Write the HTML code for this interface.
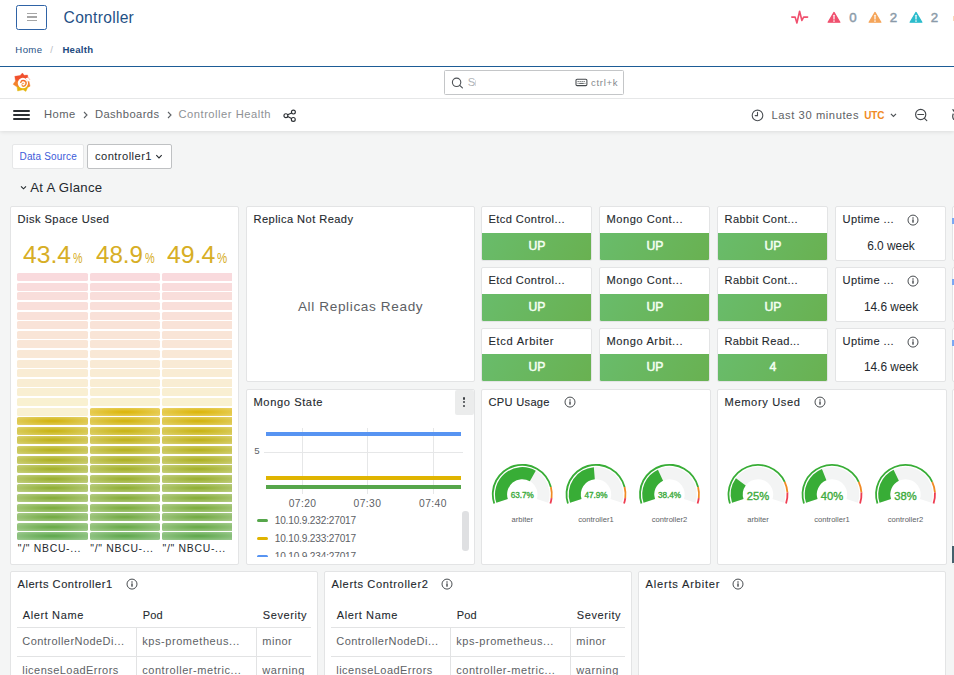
<!DOCTYPE html>
<html><head><meta charset="utf-8"><title>Controller Health</title><style>
html,body{margin:0;padding:0;}
body{width:954px;height:675px;overflow:hidden;position:relative;background:#f4f5f5;font-family:"Liberation Sans", sans-serif;}
#root{position:absolute;left:0;top:0;width:954px;height:675px;overflow:hidden;}
#root div,#root span,#root svg{position:absolute;box-sizing:border-box;}
.t{white-space:nowrap;font-family:"Liberation Sans", sans-serif;}
.p{background:#fff;border:1px solid #e3e4e5;border-radius:2px;}
</style></head><body><div id="root">
<div style="left:0px;top:0px;width:954px;height:66px;background:#fff;"></div>
<div style="left:16px;top:5px;width:31px;height:25px;border:1px solid #2f63a6;border-radius:2.4px;background:#fff;"></div>
<div style="left:26.5px;top:13.0px;width:10.2px;height:1.0px;background:#a6a6a6;"></div>
<div style="left:26.5px;top:16.2px;width:10.2px;height:1.5px;background:#a6a6a6;"></div>
<div style="left:26.5px;top:19.8px;width:10.2px;height:1.0px;background:#a6a6a6;"></div>
<span class="t" style="left:63.6px;top:10.19px;font-size:15.6px;line-height:15.6px;color:#1f5186;font-weight:400;letter-spacing:0.288px;">Controller</span>
<span class="t" style="left:15.3px;top:44.87px;font-size:9.6px;line-height:9.6px;color:#1f5186;font-weight:400;letter-spacing:0.402px;">Home</span>
<span class="t" style="left:50.2px;top:44.87px;font-size:9.6px;line-height:9.6px;color:#b8bcc2;font-weight:400;">/</span>
<span class="t" style="left:62.4px;top:44.87px;font-size:9.6px;line-height:9.6px;color:#1d4a80;font-weight:700;letter-spacing:0.294px;">Health</span>
<div style="left:0px;top:66px;width:954px;height:1.4px;background:#1d5c96;"></div>
<svg style="left:790px;top:9px;width:19px;height:17px" viewBox="0 0 19 17"><path d="M1.8 8.1 H5.1 L6.9 14 L9.6 2.3 L11.9 11.5 L13.6 8.1 H17.6" fill="none" stroke="#f0506e" stroke-width="1.6" stroke-linejoin="round" stroke-linecap="round"/></svg>
<svg style="left:826.8px;top:10.6px;width:14px;height:13px" viewBox="0 0 14 13"><path d="M7 1.4 L12.9 11.2 H1.1 Z" fill="#f0506e" stroke="#f0506e" stroke-width="1.2" stroke-linejoin="round"/><rect x="6.4" y="3.7" width="1.2" height="4.9" rx="0.5" fill="#fff"/><circle cx="7" cy="10.1" r="0.8" fill="#fff"/></svg>
<span class="t" style="left:849.2px;top:10.54px;font-size:13.3px;line-height:13.3px;color:#8a9aa8;font-weight:400;-webkit-text-stroke:0.45px #8a9aa8;">0</span>
<svg style="left:867.6px;top:10.6px;width:14px;height:13px" viewBox="0 0 14 13"><path d="M7 1.4 L12.9 11.2 H1.1 Z" fill="#f5a55a" stroke="#f5a55a" stroke-width="1.2" stroke-linejoin="round"/><rect x="6.4" y="3.7" width="1.2" height="4.9" rx="0.5" fill="#fff"/><circle cx="7" cy="10.1" r="0.8" fill="#fff"/></svg>
<span class="t" style="left:889.7px;top:10.54px;font-size:13.3px;line-height:13.3px;color:#8a9aa8;font-weight:400;-webkit-text-stroke:0.45px #8a9aa8;">2</span>
<svg style="left:908.8px;top:10.6px;width:14px;height:13px" viewBox="0 0 14 13"><path d="M7 1.4 L12.9 11.2 H1.1 Z" fill="#2bbccc" stroke="#2bbccc" stroke-width="1.2" stroke-linejoin="round"/><rect x="6.4" y="3.7" width="1.2" height="4.9" rx="0.5" fill="#fff"/><circle cx="7" cy="10.1" r="0.8" fill="#fff"/></svg>
<span class="t" style="left:930.7px;top:10.54px;font-size:13.3px;line-height:13.3px;color:#8a9aa8;font-weight:400;-webkit-text-stroke:0.45px #8a9aa8;">2</span>
<div style="left:953px;top:16px;width:1px;height:5px;background:#fbd9b5;"></div>
<div style="left:0px;top:67.4px;width:954px;height:31px;background:#fff;"></div>
<div style="left:0px;top:98px;width:954px;height:1px;background:#e6e7e8;"></div>
<svg style="left:8px;top:68px;width:30px;height:30px" viewBox="0 0 675 675">
<defs><linearGradient id="gl" gradientUnits="userSpaceOnUse" x1="0" y1="108" x2="0" y2="540"><stop offset="0" stop-color="#f04a2d"/><stop offset="0.36" stop-color="#f1542c"/><stop offset="0.44" stop-color="#f47d2e"/><stop offset="0.70" stop-color="#f3872a"/><stop offset="0.76" stop-color="#e6b50b"/><stop offset="1" stop-color="#e2b40a"/></linearGradient></defs>
<path d="M325 112 L364 164 L440 158 L448 206 L490 262 L474 312 L498 408 L444 438 L402 528 L340 490 L216 518 L204 430 L114 366 L168 292 L152 188 L272 168 Z" fill="url(#gl)" stroke="url(#gl)" stroke-width="8" stroke-linejoin="round"/>
<circle cx="335" cy="338" r="116" fill="#fff"/>
<path d="M395 232 L452 212 L518 305 L440 300 Z" fill="#fff"/>
<path d="M286.7 323.8 A62 62 0 1 1 323.8 403.3" fill="none" stroke="url(#gl)" stroke-width="32" stroke-linecap="round"/>
<path d="M323.8 403.3 Q300 385 318 352 Q335 330 356 345" fill="none" stroke="url(#gl)" stroke-width="20" stroke-linecap="round" opacity="0.85"/>
</svg>
<div style="left:444px;top:70px;width:180px;height:25px;border:1px solid #c4c6c8;border-radius:1.5px;background:#fff;"></div>
<svg style="left:451px;top:76.5px;width:12px;height:12px" viewBox="0 0 12 12"><circle cx="5.6" cy="5.3" r="4.2" fill="none" stroke="#4d5155" stroke-width="1.1"/><path d="M8.7 8.4 L11.4 10.9" stroke="#4d5155" stroke-width="1.2" stroke-linecap="round"/></svg>
<span class="t" style="left:467.7px;top:77.13px;font-size:11.3px;line-height:11.3px;color:#b0b3b6;font-weight:400;">S</span>
<div style="left:474.7px;top:80.2px;width:1.1px;height:5.6px;background:#c9cbcd;opacity:.7;border-radius:1px;"></div>
<svg style="left:575px;top:77px;width:13px;height:10px" viewBox="0 0 13 10"><rect x="1.0" y="2.2" width="10.9" height="6.4" rx="1.1" fill="none" stroke="#44484c" stroke-width="1.05"/><path d="M2.6 4.5 h7.8" stroke="#44484c" stroke-width="0.9" stroke-dasharray="1.1 0.9"/><path d="M4.2 6.4 h4.6" stroke="#44484c" stroke-width="0.9"/><path d="M2.6 6.4 h0.9 M9.5 6.4 h0.9" stroke="#44484c" stroke-width="0.9"/></svg>
<span class="t" style="left:591.0px;top:77.76px;font-size:9.5px;line-height:9.5px;color:#85888c;font-weight:400;letter-spacing:0.726px;">ctrl+k</span>
<div style="left:0px;top:99px;width:954px;height:32px;background:#fff;box-shadow:0 1px 4px rgba(0,0,0,0.10);clip-path:inset(0px 0px -12px 0px);"></div>
<div style="left:13.4px;top:109.7px;width:16.2px;height:1.9px;background:#2b2f33;border-radius:1px;"></div>
<div style="left:13.4px;top:113.7px;width:16.2px;height:1.9px;background:#2b2f33;border-radius:1px;"></div>
<div style="left:13.4px;top:117.7px;width:16.2px;height:1.9px;background:#2b2f33;border-radius:1px;"></div>
<span class="t" style="left:44px;top:109.12px;font-size:11.2px;line-height:11.2px;color:#5d6165;font-weight:400;letter-spacing:0.452px;">Home</span>
<svg style="left:83px;top:111px;width:5px;height:8px" viewBox="0 0 5 8"><path d="M1 1 L4 4 L1 7" fill="none" stroke="#5d6165" stroke-width="1.1"/></svg>
<span class="t" style="left:95px;top:109.12px;font-size:11.2px;line-height:11.2px;color:#5d6165;font-weight:400;letter-spacing:0.408px;">Dashboards</span>
<svg style="left:167px;top:111px;width:5px;height:8px" viewBox="0 0 5 8"><path d="M1 1 L4 4 L1 7" fill="none" stroke="#5d6165" stroke-width="1.1"/></svg>
<span class="t" style="left:178.5px;top:109.12px;font-size:11.2px;line-height:11.2px;color:#8e9194;font-weight:400;letter-spacing:0.503px;">Controller Health</span>
<svg style="left:282.9px;top:107.5px;width:14px;height:15px" viewBox="0 0 14 15"><circle cx="10.4" cy="4.0" r="1.95" fill="none" stroke="#2b2f33" stroke-width="1.15"/><circle cx="2.9" cy="7.7" r="1.95" fill="none" stroke="#2b2f33" stroke-width="1.15"/><circle cx="10.3" cy="11.4" r="1.95" fill="none" stroke="#2b2f33" stroke-width="1.15"/><path d="M4.7 6.8 L8.6 4.9 M4.7 8.6 L8.5 10.5" stroke="#2b2f33" stroke-width="1.15"/></svg>
<svg style="left:750.5px;top:109px;width:13px;height:13px" viewBox="0 0 13 13"><circle cx="6.5" cy="6.4" r="5.3" fill="none" stroke="#4d5155" stroke-width="1.1"/><path d="M6.5 3.4 V6.6 H4.2" fill="none" stroke="#4d5155" stroke-width="1.1" stroke-linecap="round"/></svg>
<span class="t" style="left:771.5px;top:110.12px;font-size:11.2px;line-height:11.2px;color:#5d6165;font-weight:400;letter-spacing:0.573px;">Last 30 minutes</span>
<span class="t" style="left:864.3px;top:111.03px;font-size:10.0px;line-height:10.0px;color:#f08a24;font-weight:700;letter-spacing:-0.181px;">UTC</span>
<svg style="left:889px;top:112px;width:9px;height:6px" viewBox="0 0 9 6"><path d="M1.9 1.9 L4.45 4.5 L7 1.9" fill="none" stroke="#4d5155" stroke-width="1.15"/></svg>
<svg style="left:914px;top:108px;width:14px;height:14px" viewBox="0 0 14 14"><circle cx="6.7" cy="6.5" r="5.1" fill="none" stroke="#44484c" stroke-width="1.15"/><path d="M10.5 10.4 L12.8 12.7 M3.8 6.5 H9.6" stroke="#44484c" stroke-width="1.15" stroke-linecap="round"/></svg>
<svg style="left:950px;top:106px;width:6px;height:18px" viewBox="0 0 6 18"><path d="M1.8 3.2 L4.5 3.6 L4.2 6.6 Z" fill="#44484c"/><path d="M3.4 7.6 Q1.8 10.6 3.8 13.8" fill="none" stroke="#44484c" stroke-width="1.2"/></svg>
<div style="left:12px;top:144px;width:72px;height:25px;background:#fff;border:1px solid #e6e7e8;border-radius:2px;"></div>
<span class="t" style="left:19.5px;top:152.03px;font-size:10px;line-height:10px;color:#3d5bd9;font-weight:400;letter-spacing:0.161px;">Data Source</span>
<div style="left:87px;top:144px;width:85px;height:25px;background:#fff;border:1px solid #bfc1c3;border-radius:2px;"></div>
<span class="t" style="left:95px;top:151.12px;font-size:11.2px;line-height:11.2px;color:#24292e;font-weight:400;letter-spacing:0.427px;">controller1</span>
<svg style="left:155px;top:154px;width:8px;height:6px" viewBox="0 0 8 6"><path d="M1.3 1.2 L4 3.9 L6.7 1.2" fill="none" stroke="#24292e" stroke-width="1.1"/></svg>
<svg style="left:20px;top:185px;width:7px;height:6px" viewBox="0 0 7 6"><path d="M1 1.3 L3.5 3.8 L6 1.3" fill="none" stroke="#24292e" stroke-width="1.1"/></svg>
<span class="t" style="left:30.2px;top:181.03px;font-size:13.2px;line-height:13.2px;color:#24292e;font-weight:400;letter-spacing:0.308px;">At A Glance</span>
<div class="p" style="left:10px;top:206px;width:229px;height:359px;"></div>
<span class="t" style="left:17.5px;top:213.50px;font-size:11.1px;line-height:11.1px;color:#24292e;font-weight:400;letter-spacing:0.458px;-webkit-text-stroke:0.12px #24292e;">Disk Space Used</span>
<span class="t" style="left:23.0px;top:242.68px;font-size:24px;line-height:24px;color:#d7ae25;font-weight:400;transform-origin:0 0;transform:scaleX(1.0274);">43.4</span>
<span class="t" style="left:72.9px;top:250.81px;font-size:14.4px;line-height:14.4px;color:#d7ae25;font-weight:400;transform-origin:0 0;transform:scaleX(0.7424);">%</span>
<span class="t" style="left:95.6px;top:242.68px;font-size:24px;line-height:24px;color:#d7ae25;font-weight:400;transform-origin:0 0;transform:scaleX(1.0060);">48.9</span>
<span class="t" style="left:144.6px;top:250.81px;font-size:14.4px;line-height:14.4px;color:#d7ae25;font-weight:400;transform-origin:0 0;transform:scaleX(0.7580);">%</span>
<span class="t" style="left:167px;top:242.68px;font-size:24px;line-height:24px;color:#d7ae25;font-weight:400;transform-origin:0 0;transform:scaleX(1.0338);">49.4</span>
<span class="t" style="left:216.6px;top:250.81px;font-size:14.4px;line-height:14.4px;color:#d7ae25;font-weight:400;transform-origin:0 0;transform:scaleX(0.7971);">%</span>
<div style="left:10px;top:268px;width:222px;height:275px;overflow:hidden;"><div style="left:7.1px;top:5.0px;width:70.8px;height:8px;border-radius:1.6px;background:rgba(224,52,66,0.18);"></div><div style="left:7.1px;top:15.0px;width:70.8px;height:8px;border-radius:1.6px;background:rgba(224,61,61,0.18);"></div><div style="left:7.1px;top:24.0px;width:70.8px;height:8px;border-radius:1.6px;background:rgba(224,71,56,0.18);"></div><div style="left:7.1px;top:34.0px;width:70.8px;height:8px;border-radius:1.6px;background:rgba(224,80,51,0.18);"></div><div style="left:7.1px;top:44.0px;width:70.8px;height:8px;border-radius:1.6px;background:rgba(224,90,46,0.18);"></div><div style="left:7.1px;top:53.0px;width:70.8px;height:8px;border-radius:1.6px;background:rgba(224,99,41,0.18);"></div><div style="left:7.1px;top:63.0px;width:70.8px;height:8px;border-radius:1.6px;background:rgba(224,109,36,0.18);"></div><div style="left:7.1px;top:72.0px;width:70.8px;height:8px;border-radius:1.6px;background:rgba(224,118,32,0.18);"></div><div style="left:7.1px;top:82.0px;width:70.8px;height:8px;border-radius:1.6px;background:rgba(224,128,27,0.18);"></div><div style="left:7.1px;top:92.0px;width:70.8px;height:8px;border-radius:1.6px;background:rgba(224,137,22,0.18);"></div><div style="left:7.1px;top:101.0px;width:70.8px;height:8px;border-radius:1.6px;background:rgba(224,147,17,0.18);"></div><div style="left:7.1px;top:111.0px;width:70.8px;height:8px;border-radius:1.6px;background:rgba(224,156,12,0.18);"></div><div style="left:7.1px;top:120.0px;width:70.8px;height:8px;border-radius:1.6px;background:rgba(224,166,7,0.18);"></div><div style="left:7.1px;top:130.0px;width:70.8px;height:8px;border-radius:1.6px;background:rgba(224,175,2,0.18);"></div><div style="left:7.1px;top:140.0px;width:70.8px;height:8px;border-radius:1.6px;background:rgba(219,180,3,0.18);"></div><div style="left:7.1px;top:149.0px;width:70.8px;height:8px;border-radius:1.6px;background:radial-gradient(ellipse at center, rgba(209,178,8,0.95) 10%, rgba(209,178,8,0.58) 100%);"></div><div style="left:7.1px;top:159.0px;width:70.8px;height:8px;border-radius:1.6px;background:radial-gradient(ellipse at center, rgba(199,178,13,0.95) 10%, rgba(199,178,13,0.58) 100%);"></div><div style="left:7.1px;top:168.0px;width:70.8px;height:8px;border-radius:1.6px;background:radial-gradient(ellipse at center, rgba(190,176,19,0.95) 10%, rgba(190,176,19,0.58) 100%);"></div><div style="left:7.1px;top:178.0px;width:70.8px;height:8px;border-radius:1.6px;background:radial-gradient(ellipse at center, rgba(180,176,24,0.95) 10%, rgba(180,176,24,0.58) 100%);"></div><div style="left:7.1px;top:188.0px;width:70.8px;height:8px;border-radius:1.6px;background:radial-gradient(ellipse at center, rgba(170,174,29,0.95) 10%, rgba(170,174,29,0.58) 100%);"></div><div style="left:7.1px;top:197.0px;width:70.8px;height:8px;border-radius:1.6px;background:radial-gradient(ellipse at center, rgba(160,174,35,0.95) 10%, rgba(160,174,35,0.58) 100%);"></div><div style="left:7.1px;top:207.0px;width:70.8px;height:8px;border-radius:1.6px;background:radial-gradient(ellipse at center, rgba(150,172,40,0.95) 10%, rgba(150,172,40,0.58) 100%);"></div><div style="left:7.1px;top:216.0px;width:70.8px;height:8px;border-radius:1.6px;background:radial-gradient(ellipse at center, rgba(140,172,46,0.95) 10%, rgba(140,172,46,0.58) 100%);"></div><div style="left:7.1px;top:226.0px;width:70.8px;height:8px;border-radius:1.6px;background:radial-gradient(ellipse at center, rgba(130,170,51,0.95) 10%, rgba(130,170,51,0.58) 100%);"></div><div style="left:7.1px;top:236.0px;width:70.8px;height:8px;border-radius:1.6px;background:radial-gradient(ellipse at center, rgba(120,170,56,0.95) 10%, rgba(120,170,56,0.58) 100%);"></div><div style="left:7.1px;top:245.0px;width:70.8px;height:8px;border-radius:1.6px;background:radial-gradient(ellipse at center, rgba(111,168,62,0.95) 10%, rgba(111,168,62,0.58) 100%);"></div><div style="left:7.1px;top:255.0px;width:70.8px;height:8px;border-radius:1.6px;background:radial-gradient(ellipse at center, rgba(101,168,67,0.95) 10%, rgba(101,168,67,0.58) 100%);"></div><div style="left:7.1px;top:264.0px;width:70.8px;height:8px;border-radius:1.6px;background:radial-gradient(ellipse at center, rgba(91,166,72,0.95) 10%, rgba(91,166,72,0.58) 100%);"></div><div style="left:80.1px;top:5.0px;width:69.8px;height:8px;border-radius:1.6px;background:rgba(224,52,66,0.18);"></div><div style="left:80.1px;top:15.0px;width:69.8px;height:8px;border-radius:1.6px;background:rgba(224,61,61,0.18);"></div><div style="left:80.1px;top:24.0px;width:69.8px;height:8px;border-radius:1.6px;background:rgba(224,71,56,0.18);"></div><div style="left:80.1px;top:34.0px;width:69.8px;height:8px;border-radius:1.6px;background:rgba(224,80,51,0.18);"></div><div style="left:80.1px;top:44.0px;width:69.8px;height:8px;border-radius:1.6px;background:rgba(224,90,46,0.18);"></div><div style="left:80.1px;top:53.0px;width:69.8px;height:8px;border-radius:1.6px;background:rgba(224,99,41,0.18);"></div><div style="left:80.1px;top:63.0px;width:69.8px;height:8px;border-radius:1.6px;background:rgba(224,109,36,0.18);"></div><div style="left:80.1px;top:72.0px;width:69.8px;height:8px;border-radius:1.6px;background:rgba(224,118,32,0.18);"></div><div style="left:80.1px;top:82.0px;width:69.8px;height:8px;border-radius:1.6px;background:rgba(224,128,27,0.18);"></div><div style="left:80.1px;top:92.0px;width:69.8px;height:8px;border-radius:1.6px;background:rgba(224,137,22,0.18);"></div><div style="left:80.1px;top:101.0px;width:69.8px;height:8px;border-radius:1.6px;background:rgba(224,147,17,0.18);"></div><div style="left:80.1px;top:111.0px;width:69.8px;height:8px;border-radius:1.6px;background:rgba(224,156,12,0.18);"></div><div style="left:80.1px;top:120.0px;width:69.8px;height:8px;border-radius:1.6px;background:rgba(224,166,7,0.18);"></div><div style="left:80.1px;top:130.0px;width:69.8px;height:8px;border-radius:1.6px;background:rgba(224,175,2,0.18);"></div><div style="left:80.1px;top:140.0px;width:69.8px;height:8px;border-radius:1.6px;background:radial-gradient(ellipse at center, rgba(219,180,3,0.95) 10%, rgba(219,180,3,0.58) 100%);"></div><div style="left:80.1px;top:149.0px;width:69.8px;height:8px;border-radius:1.6px;background:radial-gradient(ellipse at center, rgba(209,178,8,0.95) 10%, rgba(209,178,8,0.58) 100%);"></div><div style="left:80.1px;top:159.0px;width:69.8px;height:8px;border-radius:1.6px;background:radial-gradient(ellipse at center, rgba(199,178,13,0.95) 10%, rgba(199,178,13,0.58) 100%);"></div><div style="left:80.1px;top:168.0px;width:69.8px;height:8px;border-radius:1.6px;background:radial-gradient(ellipse at center, rgba(190,176,19,0.95) 10%, rgba(190,176,19,0.58) 100%);"></div><div style="left:80.1px;top:178.0px;width:69.8px;height:8px;border-radius:1.6px;background:radial-gradient(ellipse at center, rgba(180,176,24,0.95) 10%, rgba(180,176,24,0.58) 100%);"></div><div style="left:80.1px;top:188.0px;width:69.8px;height:8px;border-radius:1.6px;background:radial-gradient(ellipse at center, rgba(170,174,29,0.95) 10%, rgba(170,174,29,0.58) 100%);"></div><div style="left:80.1px;top:197.0px;width:69.8px;height:8px;border-radius:1.6px;background:radial-gradient(ellipse at center, rgba(160,174,35,0.95) 10%, rgba(160,174,35,0.58) 100%);"></div><div style="left:80.1px;top:207.0px;width:69.8px;height:8px;border-radius:1.6px;background:radial-gradient(ellipse at center, rgba(150,172,40,0.95) 10%, rgba(150,172,40,0.58) 100%);"></div><div style="left:80.1px;top:216.0px;width:69.8px;height:8px;border-radius:1.6px;background:radial-gradient(ellipse at center, rgba(140,172,46,0.95) 10%, rgba(140,172,46,0.58) 100%);"></div><div style="left:80.1px;top:226.0px;width:69.8px;height:8px;border-radius:1.6px;background:radial-gradient(ellipse at center, rgba(130,170,51,0.95) 10%, rgba(130,170,51,0.58) 100%);"></div><div style="left:80.1px;top:236.0px;width:69.8px;height:8px;border-radius:1.6px;background:radial-gradient(ellipse at center, rgba(120,170,56,0.95) 10%, rgba(120,170,56,0.58) 100%);"></div><div style="left:80.1px;top:245.0px;width:69.8px;height:8px;border-radius:1.6px;background:radial-gradient(ellipse at center, rgba(111,168,62,0.95) 10%, rgba(111,168,62,0.58) 100%);"></div><div style="left:80.1px;top:255.0px;width:69.8px;height:8px;border-radius:1.6px;background:radial-gradient(ellipse at center, rgba(101,168,67,0.95) 10%, rgba(101,168,67,0.58) 100%);"></div><div style="left:80.1px;top:264.0px;width:69.8px;height:8px;border-radius:1.6px;background:radial-gradient(ellipse at center, rgba(91,166,72,0.95) 10%, rgba(91,166,72,0.58) 100%);"></div><div style="left:152.1px;top:5.0px;width:73px;height:8px;border-radius:1.6px;background:rgba(224,52,66,0.18);"></div><div style="left:152.1px;top:15.0px;width:73px;height:8px;border-radius:1.6px;background:rgba(224,61,61,0.18);"></div><div style="left:152.1px;top:24.0px;width:73px;height:8px;border-radius:1.6px;background:rgba(224,71,56,0.18);"></div><div style="left:152.1px;top:34.0px;width:73px;height:8px;border-radius:1.6px;background:rgba(224,80,51,0.18);"></div><div style="left:152.1px;top:44.0px;width:73px;height:8px;border-radius:1.6px;background:rgba(224,90,46,0.18);"></div><div style="left:152.1px;top:53.0px;width:73px;height:8px;border-radius:1.6px;background:rgba(224,99,41,0.18);"></div><div style="left:152.1px;top:63.0px;width:73px;height:8px;border-radius:1.6px;background:rgba(224,109,36,0.18);"></div><div style="left:152.1px;top:72.0px;width:73px;height:8px;border-radius:1.6px;background:rgba(224,118,32,0.18);"></div><div style="left:152.1px;top:82.0px;width:73px;height:8px;border-radius:1.6px;background:rgba(224,128,27,0.18);"></div><div style="left:152.1px;top:92.0px;width:73px;height:8px;border-radius:1.6px;background:rgba(224,137,22,0.18);"></div><div style="left:152.1px;top:101.0px;width:73px;height:8px;border-radius:1.6px;background:rgba(224,147,17,0.18);"></div><div style="left:152.1px;top:111.0px;width:73px;height:8px;border-radius:1.6px;background:rgba(224,156,12,0.18);"></div><div style="left:152.1px;top:120.0px;width:73px;height:8px;border-radius:1.6px;background:rgba(224,166,7,0.18);"></div><div style="left:152.1px;top:130.0px;width:73px;height:8px;border-radius:1.6px;background:rgba(224,175,2,0.18);"></div><div style="left:152.1px;top:140.0px;width:73px;height:8px;border-radius:1.6px;background:radial-gradient(ellipse at center, rgba(219,180,3,0.95) 10%, rgba(219,180,3,0.58) 100%);"></div><div style="left:152.1px;top:149.0px;width:73px;height:8px;border-radius:1.6px;background:radial-gradient(ellipse at center, rgba(209,178,8,0.95) 10%, rgba(209,178,8,0.58) 100%);"></div><div style="left:152.1px;top:159.0px;width:73px;height:8px;border-radius:1.6px;background:radial-gradient(ellipse at center, rgba(199,178,13,0.95) 10%, rgba(199,178,13,0.58) 100%);"></div><div style="left:152.1px;top:168.0px;width:73px;height:8px;border-radius:1.6px;background:radial-gradient(ellipse at center, rgba(190,176,19,0.95) 10%, rgba(190,176,19,0.58) 100%);"></div><div style="left:152.1px;top:178.0px;width:73px;height:8px;border-radius:1.6px;background:radial-gradient(ellipse at center, rgba(180,176,24,0.95) 10%, rgba(180,176,24,0.58) 100%);"></div><div style="left:152.1px;top:188.0px;width:73px;height:8px;border-radius:1.6px;background:radial-gradient(ellipse at center, rgba(170,174,29,0.95) 10%, rgba(170,174,29,0.58) 100%);"></div><div style="left:152.1px;top:197.0px;width:73px;height:8px;border-radius:1.6px;background:radial-gradient(ellipse at center, rgba(160,174,35,0.95) 10%, rgba(160,174,35,0.58) 100%);"></div><div style="left:152.1px;top:207.0px;width:73px;height:8px;border-radius:1.6px;background:radial-gradient(ellipse at center, rgba(150,172,40,0.95) 10%, rgba(150,172,40,0.58) 100%);"></div><div style="left:152.1px;top:216.0px;width:73px;height:8px;border-radius:1.6px;background:radial-gradient(ellipse at center, rgba(140,172,46,0.95) 10%, rgba(140,172,46,0.58) 100%);"></div><div style="left:152.1px;top:226.0px;width:73px;height:8px;border-radius:1.6px;background:radial-gradient(ellipse at center, rgba(130,170,51,0.95) 10%, rgba(130,170,51,0.58) 100%);"></div><div style="left:152.1px;top:236.0px;width:73px;height:8px;border-radius:1.6px;background:radial-gradient(ellipse at center, rgba(120,170,56,0.95) 10%, rgba(120,170,56,0.58) 100%);"></div><div style="left:152.1px;top:245.0px;width:73px;height:8px;border-radius:1.6px;background:radial-gradient(ellipse at center, rgba(111,168,62,0.95) 10%, rgba(111,168,62,0.58) 100%);"></div><div style="left:152.1px;top:255.0px;width:73px;height:8px;border-radius:1.6px;background:radial-gradient(ellipse at center, rgba(101,168,67,0.95) 10%, rgba(101,168,67,0.58) 100%);"></div><div style="left:152.1px;top:264.0px;width:73px;height:8px;border-radius:1.6px;background:radial-gradient(ellipse at center, rgba(91,166,72,0.95) 10%, rgba(91,166,72,0.58) 100%);"></div></div>
<span class="t" style="left:17.8px;top:544.00px;font-size:10.4px;line-height:10.4px;color:#24292e;font-weight:400;letter-spacing:0.716px;">"/" NBCU-...</span>
<span class="t" style="left:90.3px;top:544.00px;font-size:10.4px;line-height:10.4px;color:#24292e;font-weight:400;letter-spacing:0.716px;">"/" NBCU-...</span>
<span class="t" style="left:162.6px;top:544.00px;font-size:10.4px;line-height:10.4px;color:#24292e;font-weight:400;letter-spacing:0.716px;">"/" NBCU-...</span>
<div class="p" style="left:246px;top:206px;width:229px;height:176px;"></div>
<span class="t" style="left:253.5px;top:213.50px;font-size:11.1px;line-height:11.1px;color:#24292e;font-weight:400;letter-spacing:0.438px;-webkit-text-stroke:0.12px #24292e;">Replica Not Ready</span>
<span class="t" style="left:360.6px;transform:translateX(-50%);top:299.99px;font-size:13.6px;line-height:13.6px;color:#5d6165;font-weight:400;letter-spacing:0.624px;">All Replicas Ready</span>
<div class="p" style="left:952px;top:206px;width:5px;height:55px;"></div>
<div class="p" style="left:952px;top:267px;width:5px;height:55px;"></div>
<div class="p" style="left:952px;top:328px;width:5px;height:54px;"></div>
<div class="p" style="left:481px;top:206px;width:111px;height:55px;"></div>
<span class="t" style="left:488.5px;top:213.50px;font-size:11.1px;line-height:11.1px;color:#24292e;font-weight:400;letter-spacing:0.407px;-webkit-text-stroke:0.12px #24292e;">Etcd Control...</span>
<div style="left:482px;top:233px;width:109px;height:27px;background:linear-gradient(120deg,#69bc6b,#69b151);border-radius:0 0 1.2px 1.2px;"></div>
<span class="t" style="left:536.9px;transform:translateX(-50%);top:240.37px;font-size:12.2px;line-height:12.2px;color:#f4fff2;font-weight:400;-webkit-text-stroke:0.5px #f4fff2;">UP</span>
<div class="p" style="left:599px;top:206px;width:111px;height:55px;"></div>
<span class="t" style="left:606.5px;top:213.50px;font-size:11.1px;line-height:11.1px;color:#24292e;font-weight:400;letter-spacing:0.526px;-webkit-text-stroke:0.12px #24292e;">Mongo Cont...</span>
<div style="left:600px;top:233px;width:109px;height:27px;background:linear-gradient(120deg,#69bc6b,#69b151);border-radius:0 0 1.2px 1.2px;"></div>
<span class="t" style="left:654.9px;transform:translateX(-50%);top:240.37px;font-size:12.2px;line-height:12.2px;color:#f4fff2;font-weight:400;-webkit-text-stroke:0.5px #f4fff2;">UP</span>
<div class="p" style="left:717px;top:206px;width:111px;height:55px;"></div>
<span class="t" style="left:724.5px;top:213.50px;font-size:11.1px;line-height:11.1px;color:#24292e;font-weight:400;letter-spacing:0.397px;-webkit-text-stroke:0.12px #24292e;">Rabbit Cont...</span>
<div style="left:718px;top:233px;width:109px;height:27px;background:linear-gradient(120deg,#69bc6b,#69b151);border-radius:0 0 1.2px 1.2px;"></div>
<span class="t" style="left:772.9px;transform:translateX(-50%);top:240.37px;font-size:12.2px;line-height:12.2px;color:#f4fff2;font-weight:400;-webkit-text-stroke:0.5px #f4fff2;">UP</span>
<div class="p" style="left:835px;top:206px;width:111px;height:55px;"></div>
<span class="t" style="left:842.5px;top:213.50px;font-size:11.1px;line-height:11.1px;color:#24292e;font-weight:400;letter-spacing:0.392px;-webkit-text-stroke:0.12px #24292e;">Uptime ...</span>
<svg style="left:906.5px;top:214.3px;width:12px;height:12px" viewBox="0 0 12 12"><circle cx="6" cy="6.1" r="5.0" fill="none" stroke="#484c50" stroke-width="1.0"/><rect x="5.4" y="5.4" width="1.2" height="3.3" fill="#24292e"/><rect x="5.4" y="3.4" width="1.2" height="1.2" fill="#24292e"/></svg>
<span class="t" style="left:891px;transform:translateX(-50%);top:240.53px;font-size:11.9px;line-height:11.9px;color:#24292e;font-weight:400;">6.0 week</span>
<div style="left:952.3px;top:217.5px;width:2px;height:6px;background:#7aa8f3;"></div>
<div class="p" style="left:481px;top:267px;width:111px;height:55px;"></div>
<span class="t" style="left:488.5px;top:274.50px;font-size:11.1px;line-height:11.1px;color:#24292e;font-weight:400;letter-spacing:0.407px;-webkit-text-stroke:0.12px #24292e;">Etcd Control...</span>
<div style="left:482px;top:294px;width:109px;height:27px;background:linear-gradient(120deg,#69bc6b,#69b151);border-radius:0 0 1.2px 1.2px;"></div>
<span class="t" style="left:536.9px;transform:translateX(-50%);top:301.37px;font-size:12.2px;line-height:12.2px;color:#f4fff2;font-weight:400;-webkit-text-stroke:0.5px #f4fff2;">UP</span>
<div class="p" style="left:599px;top:267px;width:111px;height:55px;"></div>
<span class="t" style="left:606.5px;top:274.50px;font-size:11.1px;line-height:11.1px;color:#24292e;font-weight:400;letter-spacing:0.526px;-webkit-text-stroke:0.12px #24292e;">Mongo Cont...</span>
<div style="left:600px;top:294px;width:109px;height:27px;background:linear-gradient(120deg,#69bc6b,#69b151);border-radius:0 0 1.2px 1.2px;"></div>
<span class="t" style="left:654.9px;transform:translateX(-50%);top:301.37px;font-size:12.2px;line-height:12.2px;color:#f4fff2;font-weight:400;-webkit-text-stroke:0.5px #f4fff2;">UP</span>
<div class="p" style="left:717px;top:267px;width:111px;height:55px;"></div>
<span class="t" style="left:724.5px;top:274.50px;font-size:11.1px;line-height:11.1px;color:#24292e;font-weight:400;letter-spacing:0.397px;-webkit-text-stroke:0.12px #24292e;">Rabbit Cont...</span>
<div style="left:718px;top:294px;width:109px;height:27px;background:linear-gradient(120deg,#69bc6b,#69b151);border-radius:0 0 1.2px 1.2px;"></div>
<span class="t" style="left:772.9px;transform:translateX(-50%);top:301.37px;font-size:12.2px;line-height:12.2px;color:#f4fff2;font-weight:400;-webkit-text-stroke:0.5px #f4fff2;">UP</span>
<div class="p" style="left:835px;top:267px;width:111px;height:55px;"></div>
<span class="t" style="left:842.5px;top:274.50px;font-size:11.1px;line-height:11.1px;color:#24292e;font-weight:400;letter-spacing:0.392px;-webkit-text-stroke:0.12px #24292e;">Uptime ...</span>
<svg style="left:906.5px;top:275.3px;width:12px;height:12px" viewBox="0 0 12 12"><circle cx="6" cy="6.1" r="5.0" fill="none" stroke="#484c50" stroke-width="1.0"/><rect x="5.4" y="5.4" width="1.2" height="3.3" fill="#24292e"/><rect x="5.4" y="3.4" width="1.2" height="1.2" fill="#24292e"/></svg>
<span class="t" style="left:891px;transform:translateX(-50%);top:301.53px;font-size:11.9px;line-height:11.9px;color:#24292e;font-weight:400;">14.6 week</span>
<div style="left:952.3px;top:278.5px;width:2px;height:6px;background:#7aa8f3;"></div>
<div class="p" style="left:481px;top:328px;width:111px;height:54px;"></div>
<span class="t" style="left:488.5px;top:335.50px;font-size:11.1px;line-height:11.1px;color:#24292e;font-weight:400;letter-spacing:0.696px;-webkit-text-stroke:0.12px #24292e;">Etcd Arbiter</span>
<div style="left:482px;top:354px;width:109px;height:27px;background:linear-gradient(120deg,#69bc6b,#69b151);border-radius:0 0 1.2px 1.2px;"></div>
<span class="t" style="left:536.9px;transform:translateX(-50%);top:361.37px;font-size:12.2px;line-height:12.2px;color:#f4fff2;font-weight:400;-webkit-text-stroke:0.5px #f4fff2;">UP</span>
<div class="p" style="left:599px;top:328px;width:111px;height:54px;"></div>
<span class="t" style="left:606.5px;top:335.50px;font-size:11.1px;line-height:11.1px;color:#24292e;font-weight:400;letter-spacing:0.581px;-webkit-text-stroke:0.12px #24292e;">Mongo Arbit...</span>
<div style="left:600px;top:354px;width:109px;height:27px;background:linear-gradient(120deg,#69bc6b,#69b151);border-radius:0 0 1.2px 1.2px;"></div>
<span class="t" style="left:654.9px;transform:translateX(-50%);top:361.37px;font-size:12.2px;line-height:12.2px;color:#f4fff2;font-weight:400;-webkit-text-stroke:0.5px #f4fff2;">UP</span>
<div class="p" style="left:717px;top:328px;width:111px;height:54px;"></div>
<span class="t" style="left:724.5px;top:335.50px;font-size:11.1px;line-height:11.1px;color:#24292e;font-weight:400;letter-spacing:0.314px;-webkit-text-stroke:0.12px #24292e;">Rabbit Read...</span>
<div style="left:718px;top:354px;width:109px;height:27px;background:linear-gradient(120deg,#69bc6b,#69b151);border-radius:0 0 1.2px 1.2px;"></div>
<span class="t" style="left:772.9px;transform:translateX(-50%);top:361.37px;font-size:12.2px;line-height:12.2px;color:#f4fff2;font-weight:400;-webkit-text-stroke:0.5px #f4fff2;">4</span>
<div class="p" style="left:835px;top:328px;width:111px;height:54px;"></div>
<span class="t" style="left:842.5px;top:335.50px;font-size:11.1px;line-height:11.1px;color:#24292e;font-weight:400;letter-spacing:0.392px;-webkit-text-stroke:0.12px #24292e;">Uptime ...</span>
<svg style="left:906.5px;top:336.3px;width:12px;height:12px" viewBox="0 0 12 12"><circle cx="6" cy="6.1" r="5.0" fill="none" stroke="#484c50" stroke-width="1.0"/><rect x="5.4" y="5.4" width="1.2" height="3.3" fill="#24292e"/><rect x="5.4" y="3.4" width="1.2" height="1.2" fill="#24292e"/></svg>
<span class="t" style="left:891px;transform:translateX(-50%);top:361.53px;font-size:11.9px;line-height:11.9px;color:#24292e;font-weight:400;">14.6 week</span>
<div style="left:952.3px;top:339.5px;width:2px;height:6px;background:#7aa8f3;"></div>
<div class="p" style="left:246px;top:389px;width:229px;height:176px;"></div>
<span class="t" style="left:253.5px;top:396.50px;font-size:11.1px;line-height:11.1px;color:#24292e;font-weight:400;letter-spacing:0.609px;-webkit-text-stroke:0.12px #24292e;">Mongo State</span>
<div style="left:455px;top:390px;width:19px;height:25px;background:#ebecec;border-radius:2px;"></div>
<div style="left:463.3px;top:397.4px;width:2.2px;height:2.2px;background:#3d4145;border-radius:1.1px;"></div>
<div style="left:463.3px;top:401.3px;width:2.2px;height:2.2px;background:#3d4145;border-radius:1.1px;"></div>
<div style="left:463.3px;top:405.1px;width:2.2px;height:2.2px;background:#3d4145;border-radius:1.1px;"></div>
<div style="left:302px;top:428px;width:1px;height:66px;background:#e6e7e8;"></div>
<div style="left:367px;top:428px;width:1px;height:66px;background:#e6e7e8;"></div>
<div style="left:432.5px;top:428px;width:1px;height:66px;background:#e6e7e8;"></div>
<div style="left:264px;top:452px;width:198.6px;height:1px;background:#e6e7e8;"></div>
<span class="t" style="left:254.3px;top:446.09px;font-size:9.7px;line-height:9.7px;color:#5d6165;font-weight:400;">5</span>
<div style="left:266px;top:432px;width:195px;height:4px;background:#5794f2;"></div>
<div style="left:266px;top:476px;width:195px;height:4px;background:#e0b400;"></div>
<div style="left:266px;top:485px;width:195px;height:4px;background:#56a64b;"></div>
<span class="t" style="left:302.59999999999997px;transform:translateX(-50%);top:498.68px;font-size:10.3px;line-height:10.3px;color:#5d6165;font-weight:400;letter-spacing:0.4px;">07:20</span>
<span class="t" style="left:367.5px;transform:translateX(-50%);top:498.68px;font-size:10.3px;line-height:10.3px;color:#5d6165;font-weight:400;letter-spacing:0.4px;">07:30</span>
<span class="t" style="left:432.9px;transform:translateX(-50%);top:498.68px;font-size:10.3px;line-height:10.3px;color:#5d6165;font-weight:400;letter-spacing:0.4px;">07:40</span>
<div style="left:247px;top:511px;width:227px;height:46px;overflow:hidden;"><div style="left:10px;top:8px;width:11px;height:3px;border-radius:1.5px;background:#56a64b"></div><span class="t" style="left:27.7px;top:5.2px;font-size:10.1px;line-height:10.1px;color:#5d6165;letter-spacing:-0.17px;">10.10.9.232:27017</span><div style="left:10px;top:26px;width:11px;height:3px;border-radius:1.5px;background:#e0b400"></div><span class="t" style="left:27.7px;top:23.2px;font-size:10.1px;line-height:10.1px;color:#5d6165;letter-spacing:-0.17px;">10.10.9.233:27017</span><div style="left:10px;top:43.6px;width:11px;height:3px;border-radius:1.5px;background:#5794f2"></div><span class="t" style="left:27.7px;top:40.8px;font-size:10.1px;line-height:10.1px;color:#5d6165;letter-spacing:-0.17px;">10.10.9.234:27017</span></div>
<div style="left:462.4px;top:511px;width:6.4px;height:40px;background:#dfe0e2;border-radius:3.2px;"></div>
<div class="p" style="left:481px;top:389px;width:230px;height:176px;"></div>
<span class="t" style="left:488.5px;top:396.50px;font-size:11.1px;line-height:11.1px;color:#24292e;font-weight:400;letter-spacing:0.303px;-webkit-text-stroke:0.12px #24292e;">CPU Usage</span>
<svg style="left:563.5px;top:396.4px;width:12px;height:12px" viewBox="0 0 12 12"><circle cx="6" cy="6.1" r="5.0" fill="none" stroke="#484c50" stroke-width="1.0"/><rect x="5.4" y="5.4" width="1.2" height="3.3" fill="#24292e"/><rect x="5.4" y="3.4" width="1.2" height="1.2" fill="#24292e"/></svg>
<svg style="left:0;top:0;width:954px;height:675px;pointer-events:none" viewBox="0 0 954 675"><path d="M496.34 502.84 A27.299999999999997 27.299999999999997 0 1 1 548.26 502.84 L536.76 499.10 A15.2 15.2 0 1 0 507.84 499.10 Z" fill="#f3f4f4"/><path d="M496.34 502.84 A27.299999999999997 27.299999999999997 0 0 1 535.78 470.66 L529.81 481.18 A15.2 15.2 0 0 0 507.84 499.10 Z" fill="#38ad36"/><path d="M493.39 503.79 A30.4 30.4 0 1 1 551.74 486.84 L550.00 487.29 A28.599999999999998 28.599999999999998 0 1 0 495.10 503.24 Z" fill="#38ad36"/><path d="M551.74 486.84 A30.4 30.4 0 0 1 552.46 498.21 L550.67 497.98 A28.599999999999998 28.599999999999998 0 0 0 550.00 487.29 Z" fill="#f08a24"/><path d="M552.46 498.21 A30.4 30.4 0 0 1 551.21 503.79 L549.50 503.24 A28.599999999999998 28.599999999999998 0 0 0 550.67 497.98 Z" fill="#ee3d52"/></svg>
<span class="t" style="left:522.3px;transform:translateX(-50%);top:491.56px;font-size:8.2px;line-height:8.2px;color:#3dab3d;font-weight:400;-webkit-text-stroke:0.35px #3dab3d;">63.7%</span>
<span class="t" style="left:522.3px;transform:translateX(-50%);top:515.97px;font-size:7.6px;line-height:7.6px;color:#5d6165;font-weight:400;">arbiter</span>
<svg style="left:0;top:0;width:954px;height:675px;pointer-events:none" viewBox="0 0 954 675"><path d="M570.04 502.84 A27.299999999999997 27.299999999999997 0 1 1 621.96 502.84 L610.46 499.10 A15.2 15.2 0 1 0 581.54 499.10 Z" fill="#f3f4f4"/><path d="M570.04 502.84 A27.299999999999997 27.299999999999997 0 0 1 593.84 467.19 L594.80 479.25 A15.2 15.2 0 0 0 581.54 499.10 Z" fill="#38ad36"/><path d="M567.09 503.79 A30.4 30.4 0 1 1 625.44 486.84 L623.70 487.29 A28.599999999999998 28.599999999999998 0 1 0 568.80 503.24 Z" fill="#38ad36"/><path d="M625.44 486.84 A30.4 30.4 0 0 1 626.16 498.21 L624.37 497.98 A28.599999999999998 28.599999999999998 0 0 0 623.70 487.29 Z" fill="#f08a24"/><path d="M626.16 498.21 A30.4 30.4 0 0 1 624.91 503.79 L623.20 503.24 A28.599999999999998 28.599999999999998 0 0 0 624.37 497.98 Z" fill="#ee3d52"/></svg>
<span class="t" style="left:596px;transform:translateX(-50%);top:491.56px;font-size:8.2px;line-height:8.2px;color:#3dab3d;font-weight:400;-webkit-text-stroke:0.35px #3dab3d;">47.9%</span>
<span class="t" style="left:596px;transform:translateX(-50%);top:515.97px;font-size:7.6px;line-height:7.6px;color:#5d6165;font-weight:400;">controller1</span>
<svg style="left:0;top:0;width:954px;height:675px;pointer-events:none" viewBox="0 0 954 675"><path d="M643.54 502.84 A27.299999999999997 27.299999999999997 0 1 1 695.46 502.84 L683.96 499.10 A15.2 15.2 0 1 0 655.04 499.10 Z" fill="#f3f4f4"/><path d="M643.54 502.84 A27.299999999999997 27.299999999999997 0 0 1 657.94 469.67 L663.06 480.63 A15.2 15.2 0 0 0 655.04 499.10 Z" fill="#38ad36"/><path d="M640.59 503.79 A30.4 30.4 0 1 1 698.94 486.84 L697.20 487.29 A28.599999999999998 28.599999999999998 0 1 0 642.30 503.24 Z" fill="#38ad36"/><path d="M698.94 486.84 A30.4 30.4 0 0 1 699.66 498.21 L697.87 497.98 A28.599999999999998 28.599999999999998 0 0 0 697.20 487.29 Z" fill="#f08a24"/><path d="M699.66 498.21 A30.4 30.4 0 0 1 698.41 503.79 L696.70 503.24 A28.599999999999998 28.599999999999998 0 0 0 697.87 497.98 Z" fill="#ee3d52"/></svg>
<span class="t" style="left:669.5px;transform:translateX(-50%);top:491.56px;font-size:8.2px;line-height:8.2px;color:#3dab3d;font-weight:400;-webkit-text-stroke:0.35px #3dab3d;">38.4%</span>
<span class="t" style="left:669.5px;transform:translateX(-50%);top:515.97px;font-size:7.6px;line-height:7.6px;color:#5d6165;font-weight:400;">controller2</span>
<div class="p" style="left:717px;top:389px;width:230px;height:176px;"></div>
<span class="t" style="left:724.5px;top:396.50px;font-size:11.1px;line-height:11.1px;color:#24292e;font-weight:400;letter-spacing:0.645px;-webkit-text-stroke:0.12px #24292e;">Memory Used</span>
<svg style="left:813.5px;top:396.4px;width:12px;height:12px" viewBox="0 0 12 12"><circle cx="6" cy="6.1" r="5.0" fill="none" stroke="#484c50" stroke-width="1.0"/><rect x="5.4" y="5.4" width="1.2" height="3.3" fill="#24292e"/><rect x="5.4" y="3.4" width="1.2" height="1.2" fill="#24292e"/></svg>
<svg style="left:0;top:0;width:954px;height:675px;pointer-events:none" viewBox="0 0 954 675"><path d="M732.04 502.84 A27.299999999999997 27.299999999999997 0 1 1 783.96 502.84 L772.46 499.10 A15.2 15.2 0 1 0 743.54 499.10 Z" fill="#f3f4f4"/><path d="M732.04 502.84 A27.299999999999997 27.299999999999997 0 0 1 735.91 478.35 L745.70 485.47 A15.2 15.2 0 0 0 743.54 499.10 Z" fill="#38ad36"/><path d="M729.09 503.79 A30.4 30.4 0 0 1 785.51 481.46 L783.88 482.22 A28.599999999999998 28.599999999999998 0 0 0 730.80 503.24 Z" fill="#38ad36"/><path d="M785.51 481.46 A30.4 30.4 0 0 1 788.34 492.49 L786.54 492.60 A28.599999999999998 28.599999999999998 0 0 0 783.88 482.22 Z" fill="#f08a24"/><path d="M788.34 492.49 A30.4 30.4 0 0 1 786.91 503.79 L785.20 503.24 A28.599999999999998 28.599999999999998 0 0 0 786.54 492.60 Z" fill="#ee3d52"/></svg>
<span class="t" style="left:758px;transform:translateX(-50%);top:490.92px;font-size:11.2px;line-height:11.2px;color:#3dab3d;font-weight:400;-webkit-text-stroke:0.35px #3dab3d;">25%</span>
<span class="t" style="left:758px;transform:translateX(-50%);top:515.97px;font-size:7.6px;line-height:7.6px;color:#5d6165;font-weight:400;">arbiter</span>
<svg style="left:0;top:0;width:954px;height:675px;pointer-events:none" viewBox="0 0 954 675"><path d="M806.04 502.84 A27.299999999999997 27.299999999999997 0 1 1 857.96 502.84 L846.46 499.10 A15.2 15.2 0 1 0 817.54 499.10 Z" fill="#f3f4f4"/><path d="M806.04 502.84 A27.299999999999997 27.299999999999997 0 0 1 821.95 469.02 L826.40 480.27 A15.2 15.2 0 0 0 817.54 499.10 Z" fill="#38ad36"/><path d="M803.09 503.79 A30.4 30.4 0 0 1 859.51 481.46 L857.88 482.22 A28.599999999999998 28.599999999999998 0 0 0 804.80 503.24 Z" fill="#38ad36"/><path d="M859.51 481.46 A30.4 30.4 0 0 1 862.34 492.49 L860.54 492.60 A28.599999999999998 28.599999999999998 0 0 0 857.88 482.22 Z" fill="#f08a24"/><path d="M862.34 492.49 A30.4 30.4 0 0 1 860.91 503.79 L859.20 503.24 A28.599999999999998 28.599999999999998 0 0 0 860.54 492.60 Z" fill="#ee3d52"/></svg>
<span class="t" style="left:832px;transform:translateX(-50%);top:490.92px;font-size:11.2px;line-height:11.2px;color:#3dab3d;font-weight:400;-webkit-text-stroke:0.35px #3dab3d;">40%</span>
<span class="t" style="left:832px;transform:translateX(-50%);top:515.97px;font-size:7.6px;line-height:7.6px;color:#5d6165;font-weight:400;">controller1</span>
<svg style="left:0;top:0;width:954px;height:675px;pointer-events:none" viewBox="0 0 954 675"><path d="M879.54 502.84 A27.299999999999997 27.299999999999997 0 1 1 931.46 502.84 L919.96 499.10 A15.2 15.2 0 1 0 891.04 499.10 Z" fill="#f3f4f4"/><path d="M879.54 502.84 A27.299999999999997 27.299999999999997 0 0 1 893.57 469.85 L898.86 480.73 A15.2 15.2 0 0 0 891.04 499.10 Z" fill="#38ad36"/><path d="M876.59 503.79 A30.4 30.4 0 0 1 933.01 481.46 L931.38 482.22 A28.599999999999998 28.599999999999998 0 0 0 878.30 503.24 Z" fill="#38ad36"/><path d="M933.01 481.46 A30.4 30.4 0 0 1 935.84 492.49 L934.04 492.60 A28.599999999999998 28.599999999999998 0 0 0 931.38 482.22 Z" fill="#f08a24"/><path d="M935.84 492.49 A30.4 30.4 0 0 1 934.41 503.79 L932.70 503.24 A28.599999999999998 28.599999999999998 0 0 0 934.04 492.60 Z" fill="#ee3d52"/></svg>
<span class="t" style="left:905.5px;transform:translateX(-50%);top:490.92px;font-size:11.2px;line-height:11.2px;color:#3dab3d;font-weight:400;-webkit-text-stroke:0.35px #3dab3d;">38%</span>
<span class="t" style="left:905.5px;transform:translateX(-50%);top:515.97px;font-size:7.6px;line-height:7.6px;color:#5d6165;font-weight:400;">controller2</span>
<div class="p" style="left:952px;top:389px;width:5px;height:176px;"></div>
<div style="left:952px;top:546px;width:3px;height:17px;background:#44606c;"></div>
<div class="p" style="left:10px;top:571px;width:308px;height:120px;"></div>
<span class="t" style="left:17.5px;top:578.50px;font-size:11.1px;line-height:11.1px;color:#24292e;font-weight:400;letter-spacing:0.523px;-webkit-text-stroke:0.12px #24292e;">Alerts Controller1</span>
<svg style="left:125.5px;top:578.4px;width:12px;height:12px" viewBox="0 0 12 12"><circle cx="6" cy="6.1" r="5.0" fill="none" stroke="#484c50" stroke-width="1.0"/><rect x="5.4" y="5.4" width="1.2" height="3.3" fill="#24292e"/><rect x="5.4" y="3.4" width="1.2" height="1.2" fill="#24292e"/></svg>
<span class="t" style="left:22.8px;top:609.59px;font-size:11px;line-height:11px;color:#24292e;font-weight:400;letter-spacing:0.608px;-webkit-text-stroke:0.08px #24292e;">Alert Name</span>
<span class="t" style="left:142.7px;top:609.59px;font-size:11px;line-height:11px;color:#24292e;font-weight:400;letter-spacing:0.211px;-webkit-text-stroke:0.08px #24292e;">Pod</span>
<span class="t" style="left:262.8px;top:609.59px;font-size:11px;line-height:11px;color:#24292e;font-weight:400;letter-spacing:0.579px;-webkit-text-stroke:0.08px #24292e;">Severity</span>
<div style="left:17px;top:627px;width:294px;height:1px;background:#e2e3e4;"></div>
<div style="left:17px;top:656px;width:294px;height:1px;background:#e2e3e4;"></div>
<div style="left:136px;top:627px;width:1px;height:50px;background:#e2e3e4;"></div>
<div style="left:256px;top:627px;width:1px;height:50px;background:#e2e3e4;"></div>
<span class="t" style="left:22.3px;top:635.59px;font-size:11px;line-height:11px;color:#5d6165;font-weight:400;letter-spacing:0.453px;">ControllerNodeDi...</span>
<span class="t" style="left:142.2px;top:635.59px;font-size:11px;line-height:11px;color:#5d6165;font-weight:400;letter-spacing:0.572px;">kps-prometheus...</span>
<span class="t" style="left:262.3px;top:635.59px;font-size:11px;line-height:11px;color:#5d6165;font-weight:400;letter-spacing:0.496px;">minor</span>
<span class="t" style="left:22.3px;top:665.29px;font-size:11px;line-height:11px;color:#5d6165;font-weight:400;letter-spacing:0.459px;">licenseLoadErrors</span>
<span class="t" style="left:142.2px;top:665.29px;font-size:11px;line-height:11px;color:#5d6165;font-weight:400;letter-spacing:0.562px;">controller-metric...</span>
<span class="t" style="left:262.3px;top:665.29px;font-size:11px;line-height:11px;color:#5d6165;font-weight:400;letter-spacing:0.578px;">warning</span>
<div class="p" style="left:324px;top:571px;width:308px;height:120px;"></div>
<span class="t" style="left:331.5px;top:578.50px;font-size:11.1px;line-height:11.1px;color:#24292e;font-weight:400;letter-spacing:0.629px;-webkit-text-stroke:0.12px #24292e;">Alerts Controller2</span>
<svg style="left:440.5px;top:578.4px;width:12px;height:12px" viewBox="0 0 12 12"><circle cx="6" cy="6.1" r="5.0" fill="none" stroke="#484c50" stroke-width="1.0"/><rect x="5.4" y="5.4" width="1.2" height="3.3" fill="#24292e"/><rect x="5.4" y="3.4" width="1.2" height="1.2" fill="#24292e"/></svg>
<span class="t" style="left:336.8px;top:609.59px;font-size:11px;line-height:11px;color:#24292e;font-weight:400;letter-spacing:0.608px;-webkit-text-stroke:0.08px #24292e;">Alert Name</span>
<span class="t" style="left:456.7px;top:609.59px;font-size:11px;line-height:11px;color:#24292e;font-weight:400;letter-spacing:0.211px;-webkit-text-stroke:0.08px #24292e;">Pod</span>
<span class="t" style="left:576.8px;top:609.59px;font-size:11px;line-height:11px;color:#24292e;font-weight:400;letter-spacing:0.579px;-webkit-text-stroke:0.08px #24292e;">Severity</span>
<div style="left:331px;top:627px;width:294px;height:1px;background:#e2e3e4;"></div>
<div style="left:331px;top:656px;width:294px;height:1px;background:#e2e3e4;"></div>
<div style="left:450px;top:627px;width:1px;height:50px;background:#e2e3e4;"></div>
<div style="left:570px;top:627px;width:1px;height:50px;background:#e2e3e4;"></div>
<span class="t" style="left:336.3px;top:635.59px;font-size:11px;line-height:11px;color:#5d6165;font-weight:400;letter-spacing:0.453px;">ControllerNodeDi...</span>
<span class="t" style="left:456.2px;top:635.59px;font-size:11px;line-height:11px;color:#5d6165;font-weight:400;letter-spacing:0.572px;">kps-prometheus...</span>
<span class="t" style="left:576.3px;top:635.59px;font-size:11px;line-height:11px;color:#5d6165;font-weight:400;letter-spacing:0.496px;">minor</span>
<span class="t" style="left:336.3px;top:665.29px;font-size:11px;line-height:11px;color:#5d6165;font-weight:400;letter-spacing:0.459px;">licenseLoadErrors</span>
<span class="t" style="left:456.2px;top:665.29px;font-size:11px;line-height:11px;color:#5d6165;font-weight:400;letter-spacing:0.562px;">controller-metric...</span>
<span class="t" style="left:576.3px;top:665.29px;font-size:11px;line-height:11px;color:#5d6165;font-weight:400;letter-spacing:0.578px;">warning</span>
<div class="p" style="left:638px;top:571px;width:308px;height:120px;"></div>
<span class="t" style="left:645.5px;top:578.50px;font-size:11.1px;line-height:11.1px;color:#24292e;font-weight:400;letter-spacing:0.806px;-webkit-text-stroke:0.12px #24292e;">Alerts Arbiter</span>
<svg style="left:731.5px;top:578.4px;width:12px;height:12px" viewBox="0 0 12 12"><circle cx="6" cy="6.1" r="5.0" fill="none" stroke="#484c50" stroke-width="1.0"/><rect x="5.4" y="5.4" width="1.2" height="3.3" fill="#24292e"/><rect x="5.4" y="3.4" width="1.2" height="1.2" fill="#24292e"/></svg>
</div></body></html>
